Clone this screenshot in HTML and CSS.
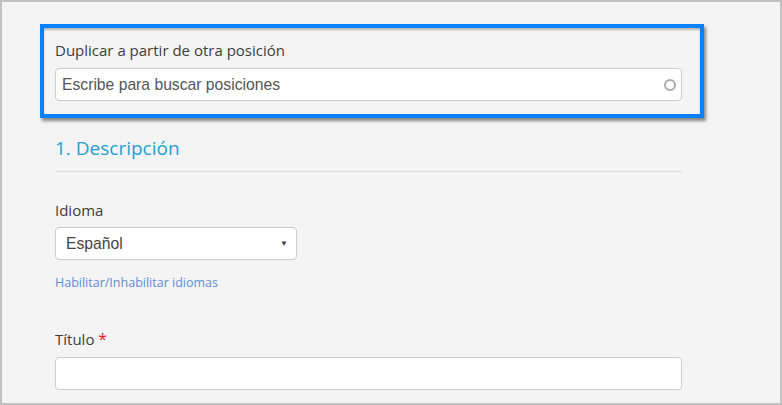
FILE: index.html
```html
<!DOCTYPE html>
<html lang="es">
<head>
<meta charset="utf-8">
<link rel="stylesheet" href="styles.css">
</head>
<body>
<div class="frame">
  <div class="form">
    <div class="highlight">
      <label class="label">Duplicar a partir de otra posición</label>
      <div class="input search">
        <span class="placeholder">Escribe para buscar posiciones</span>
        <span class="spinner"></span>
      </div>
    </div>
    <h2 class="section-title">1. Descripción</h2>
    <div class="group lang">
      <label class="label">Idioma</label>
      <div class="select">
        <span class="value">Español</span>
        <span class="caret">▼</span>
      </div>
      <a class="link">Habilitar/Inhabilitar idiomas</a>
    </div>
    <div class="group title">
      <label class="label">Título <span class="req">*</span></label>
      <div class="input"></div>
    </div>
  </div>
</div>
</body>
</html>
```
FILE: styles.css
```css
* { box-sizing: border-box; }
html, body { margin: 0; padding: 0; }
body { width: 782px; height: 405px; overflow: hidden; background: #f4f4f4; }
.frame {
  width: 782px;
  height: 405px;
  border: 2px solid #c2c2c2;
  background: #f4f4f4;
  padding: 22px 98px 0 53px;
}
.form { width: 627px; display: flex; flex-direction: column; }
.highlight {
  margin: 0 -22px 0 -15px;
  border: 4px solid #0a80fa;
  padding: 11px 18px 13px 11px;
  box-shadow: inset 0 2px 2px rgba(0,0,0,0.25), 2px 3px 3px rgba(0,0,0,0.45);
}
.label {
  display: block;
  font-family: "Open Sans", sans-serif;
  font-size: 15px;
  line-height: 22px;
  color: #3d3d3d;
}
.highlight .label { margin-bottom: 7px; }
.input {
  height: 33px;
  background: #fff;
  border: 1px solid #ccc;
  border-radius: 4px;
  display: flex;
  align-items: center;
  padding: 0 6px;
  font-family: "Liberation Sans", Arial, sans-serif;
  font-size: 15.7px;
  color: #555;
}
.search { justify-content: space-between; }
.spinner {
  width: 12px;
  height: 12px;
  border: 2px solid #aaa;
  border-radius: 50%;
  margin-right: -1px;
}
.section-title {
  margin: 16px 0 0;
  padding-bottom: 9px;
  border-bottom: 1px solid #ddd;
  font-family: "Open Sans", sans-serif;
  font-weight: 400;
  font-size: 19px;
  line-height: 28px;
  color: #1e9fd4;
}
.lang { margin-top: 27px; }
.lang .label { margin-bottom: 6px; }
.select {
  width: 242px;
  height: 33px;
  background: #fff;
  border: 1px solid #ccc;
  border-radius: 4px;
  display: flex;
  align-items: center;
  justify-content: space-between;
  padding: 0 8px 0 10px;
  font-family: "Liberation Sans", Arial, sans-serif;
  font-size: 15.7px;
  color: #444;
}
.caret { font-size: 8px; color: #444; }
.link {
  display: block;
  margin-top: 15px;
  font-family: "Open Sans", sans-serif;
  font-size: 12.5px;
  line-height: 16px;
  color: #5b8ed4;
}
.title { margin-top: 37px; }
.title .label { margin-bottom: 7px; }
.req { color: #f01c24; font-size: 16px; }
```
